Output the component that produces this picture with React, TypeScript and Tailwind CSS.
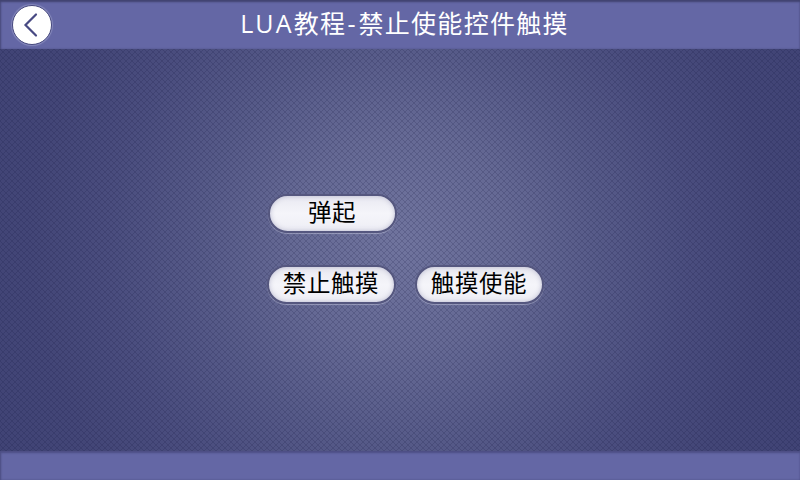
import React from "react";

const WEAVE =
  "bg-[linear-gradient(45deg,transparent_42%,rgba(18,20,62,0.18)_43%,rgba(18,20,62,0.18)_57%,transparent_58%),linear-gradient(-45deg,transparent_42%,rgba(18,20,62,0.18)_43%,rgba(18,20,62,0.18)_57%,transparent_58%),radial-gradient(circle_at_50%_48%,#70749e_0px,#656994_110px,#565a88_200px,#4a4d7e_290px,#434677_370px,#404375_460px)] [background-size:6px_6px,6px_6px,auto]";

function PillButton({ label }: { label: string }) {
  return (
    <button
      type="button"
      className="flex h-[39px] w-[129px] items-center justify-center rounded-full border-2 border-[#55577f] bg-gradient-to-b from-[#e9e9f1] via-[#f5f5fa] to-[#eeeef5] pb-[2px] text-[23.5px] leading-none tracking-[0.6px] text-black shadow-[0_1px_1px_rgba(205,207,230,0.5),inset_0_0_5px_rgba(180,180,204,0.9)]"
    >
      <span className="-ml-px whitespace-nowrap">{label}</span>
    </button>
  );
}

export default function App() {
  return (
    <div className="flex h-[480px] w-[800px] flex-col overflow-hidden [font-family:'Open_Sans','Noto_Sans_CJK_SC',sans-serif]">
      <header className="grid h-[49px] shrink-0 grid-cols-[52px_1fr_52px] items-center bg-[#6467a5] pl-3 shadow-[inset_0_2px_2px_#414370,inset_1px_0_2px_#4c4e83]">
        <button type="button" aria-label="返回" className="flex size-10 items-center justify-center rounded-full border-[1.5px] border-[#45477d] bg-white shadow-[0_0_1px_1px_rgba(150,152,200,0.7)]">
          <svg width="40" height="40" viewBox="0 0 40 40" className="shrink-0" fill="none" stroke="#484a83" strokeWidth="2.2" strokeLinecap="round">
            <path d="M24 9.5 13.5 20 24 30.5" />
          </svg>
        </button>
        <h1 className="whitespace-nowrap pb-[3px] pr-[3px] text-center text-[25px] leading-none tracking-[1.3px] text-white">
          <span className="tracking-[2.2px]">LUA</span>教程<span className="pl-px tracking-[3px]">-</span>禁止使能控件触摸
        </h1>
      </header>
      <main className={`flex h-[402px] shrink-0 flex-col gap-8 pl-[267px] pt-[145px] ${WEAVE}`}>
        <div className="flex pl-px">
          <PillButton label="弹起" />
        </div>
        <div className="flex gap-[19px]">
          <PillButton label="禁止触摸" />
          <PillButton label="触摸使能" />
        </div>
      </main>
      <footer className="h-[29px] shrink-0 bg-[#6467a5] shadow-[inset_0_2px_2px_#4d4f85,inset_1px_0_2px_#4c4e83]" />
    </div>
  );
}
